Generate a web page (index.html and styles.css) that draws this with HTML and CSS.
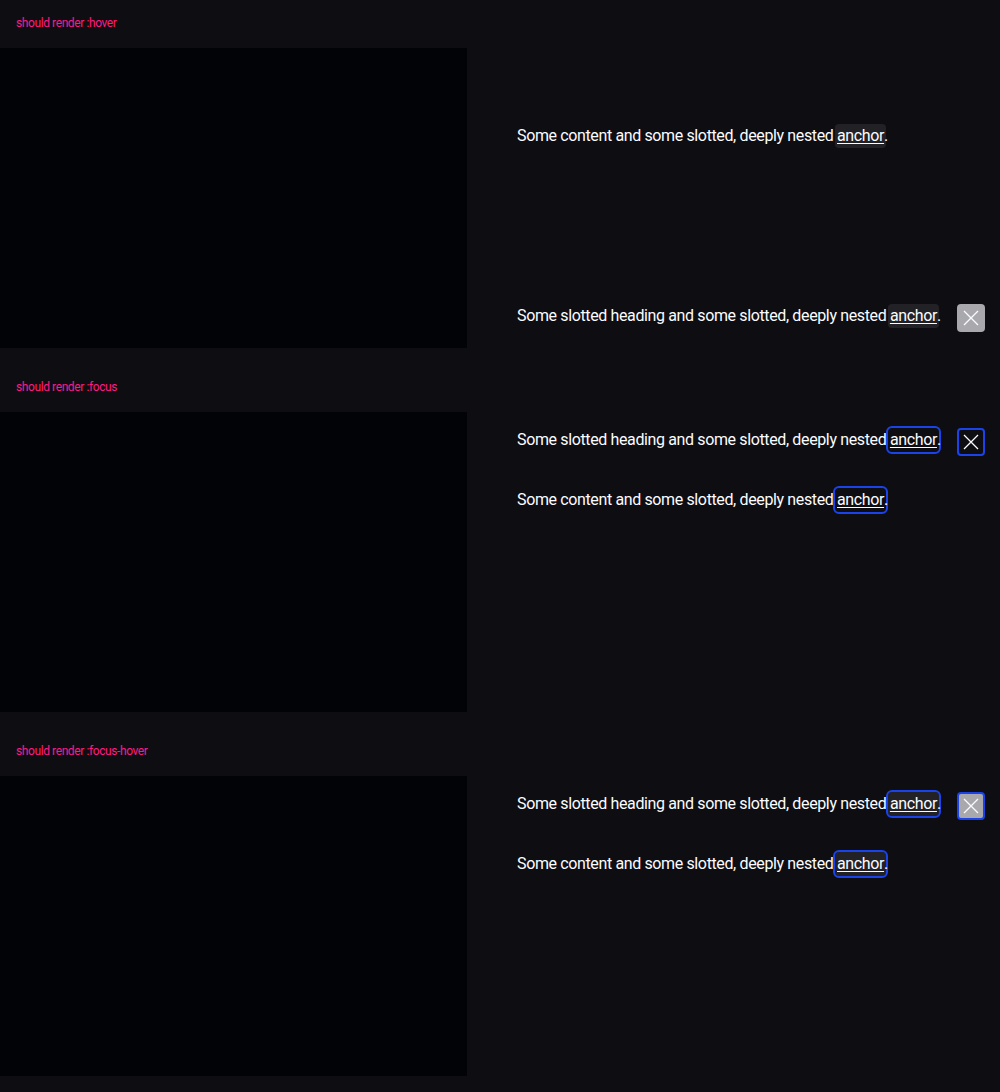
FILE: index.html
```html
<!DOCTYPE html>
<html lang="en">
<head>
<meta charset="utf-8">
<title>Flyout states</title>
<link rel="stylesheet" href="styles.css">
</head>
<body>
<section class="case case-first">
  <p class="label">should render :hover</p>
  <div class="stage">
    <div class="backdrop"></div>
    <div class="panel panel-hover">
      <p class="content">Some content and some slotted, deeply nested <a class="link is-hover" href="#">anchor</a>.</p>
      <div class="header header-bottom">
        <p class="heading">Some slotted heading and some slotted, deeply nested <a class="link is-hover" href="#">anchor</a>.</p>
        <button class="close is-hover" type="button" aria-label="Close"><svg viewBox="0 0 24 24" width="24" height="24"><path d="M5 5 L19 19 M19 5 L5 19" /></svg></button>
      </div>
    </div>
  </div>
</section>
<section class="case">
  <p class="label">should render :focus</p>
  <div class="stage">
    <div class="backdrop"></div>
    <div class="panel">
      <div class="header">
        <p class="heading">Some slotted heading and some slotted, deeply nested <a class="link is-focus" href="#">anchor</a>.</p>
        <button class="close is-focus" type="button" aria-label="Close"><svg viewBox="0 0 24 24" width="24" height="24"><path d="M5 5 L19 19 M19 5 L5 19" /></svg></button>
      </div>
      <p class="content content-after">Some content and some slotted, deeply nested <a class="link is-focus" href="#">anchor</a>.</p>
    </div>
  </div>
</section>
<section class="case">
  <p class="label">should render :focus-hover</p>
  <div class="stage">
    <div class="backdrop"></div>
    <div class="panel">
      <div class="header">
        <p class="heading">Some slotted heading and some slotted, deeply nested <a class="link is-hover is-focus" href="#">anchor</a>.</p>
        <button class="close is-hover is-focus" type="button" aria-label="Close"><svg viewBox="0 0 24 24" width="24" height="24"><path d="M5 5 L19 19 M19 5 L5 19" /></svg></button>
      </div>
      <p class="content content-after">Some content and some slotted, deeply nested <a class="link is-hover is-focus" href="#">anchor</a>.</p>
    </div>
  </div>
</section>
</body>
</html>
```

FILE: styles.css
```css
html, body {
  margin: 0;
  padding: 0;
  background: #0e0e12;
}

body {
  font-family: Roboto, "Liberation Sans", sans-serif;
  color: #fbfcff;
  padding-bottom: 16px;
}

.case {
  padding-top: 32px;
}

.case-first {
  padding-top: 16px;
}

.label {
  margin: 0 0 18px;
  padding: 0 16px;
  font-size: 12px;
  line-height: 14px;
  letter-spacing: -0.4px;
  color: #ff1a85;
}

.stage {
  display: flex;
  height: 300px;
}

.backdrop {
  width: 467px;
  flex: none;
  background: #020307;
}

.panel {
  flex: 1;
  display: flex;
  flex-direction: column;
  padding: 16px 16px 16px 50px;
  background: #0e0e12;
}

.header {
  display: flex;
  align-items: flex-start;
}

.header-bottom {
  margin-top: auto;
}

.heading,
.content {
  margin: 0;
  font-size: 16px;
  line-height: 24px;
  letter-spacing: -0.37px;
  white-space: nowrap;
}

.heading {
  flex: 1;
  min-width: 0;
}

.panel-hover .content {
  margin-top: 60px;
}

.content-after {
  margin-top: 32px;
}

.link {
  display: inline-block;
  vertical-align: top;
  color: #fbfcff;
  text-decoration: underline;
  text-underline-offset: 2px;
  text-decoration-thickness: 1px;
  padding: 0 2px;
  margin: 0 -2px;
  border-radius: 4px;
  line-height: 24px;
}

.link.is-hover {
  background: #222226;
}

.link.is-focus {
  outline: 2px solid #1a44ea;
  outline-offset: 0;
}

.close {
  flex: none;
  width: 28px;
  height: 28px;
  margin-left: 16px;
  padding: 0;
  box-sizing: border-box;
  border: 2px solid transparent;
  border-radius: 4px;
  background: transparent;
  display: flex;
  align-items: center;
  justify-content: center;
}

.close svg {
  width: 24px;
  height: 24px;
  flex: none;
  fill: none;
  stroke: #fbfcff;
  stroke-width: 1.3;
}

.close.is-hover {
  background: #a9a9ad;
}

.close.is-focus {
  border-color: #1a44ea;
}
```
